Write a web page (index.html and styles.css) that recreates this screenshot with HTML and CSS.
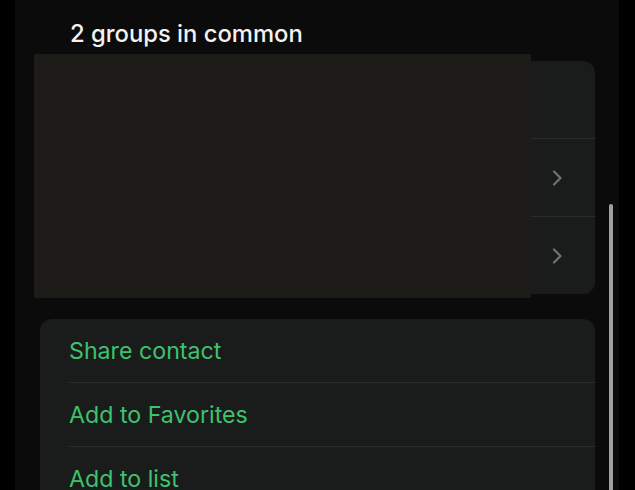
FILE: index.html
```html
<!DOCTYPE html>
<html>
<head>
<meta charset="utf-8">
<link rel="stylesheet" href="styles.css">
</head>
<body>
<div class="panel">
  <h2 class="title">2 groups in common</h2>
  <div class="card groups">
    <div class="row grow"></div>
    <div class="row grow"><span class="chev"><svg width="11" height="16" viewBox="0 0 11 16"><path d="M2 1.5 L8.5 8 L2 14.5" fill="none" stroke="#717171" stroke-width="2.2" stroke-linecap="round" stroke-linejoin="round"/></svg></span></div>
    <div class="row grow"><span class="chev"><svg width="11" height="16" viewBox="0 0 11 16"><path d="M2 1.5 L8.5 8 L2 14.5" fill="none" stroke="#717171" stroke-width="2.2" stroke-linecap="round" stroke-linejoin="round"/></svg></span></div>
  </div>
  <div class="card actions">
    <div class="row arow">Share contact</div>
    <div class="row arow">Add to Favorites</div>
    <div class="row arow">Add to list</div>
  </div>
  <div class="redact"></div>
  <div class="scrollbar"></div>
</div>
</body>
</html>
```
FILE: styles.css
```css
html, body {
  margin: 0;
  padding: 0;
  background: #000;
  height: 490px;
  overflow: hidden;
  font-family: Inter, Roboto, "Liberation Sans", sans-serif;
}
.panel {
  position: relative;
  margin-left: 15px;
  width: 604px;
  height: 490px;
  overflow: hidden;
  background: #0b0b0b;
  padding: 20px 24px 0 25px;
  box-sizing: border-box;
}
.title {
  margin: 0 0 13px 30px;
  font-size: 23.8px;
  line-height: 28px;
  font-weight: 500;
  color: #f2f2f2;
}
.card {
  background: #1a1b1b;
  border-radius: 12px;
  overflow: hidden;
}
.row {
  position: relative;
  display: flex;
  align-items: center;
  margin-left: 29px;
  border-top: 1px solid #2b2c2c;
}
.row:first-child {
  border-top: none;
}
.grow {
  height: 77px;
  justify-content: flex-end;
  padding-right: 32px;
}
.chev {
  display: flex;
}
.actions {
  margin-top: 25px;
  border-bottom-left-radius: 0;
  border-bottom-right-radius: 0;
  height: 200px;
}
.arow {
  height: 63px;
  font-size: 23.2px;
  color: #3ec26c;
}
.redact {
  position: absolute;
  left: 19px;
  top: 54px;
  width: 497px;
  height: 244px;
  background: #1e1c19;
}
.scrollbar {
  position: absolute;
  left: 594px;
  top: 204px;
  width: 4px;
  height: 300px;
  border-radius: 2px;
  background: #a0a0a0;
}
```
